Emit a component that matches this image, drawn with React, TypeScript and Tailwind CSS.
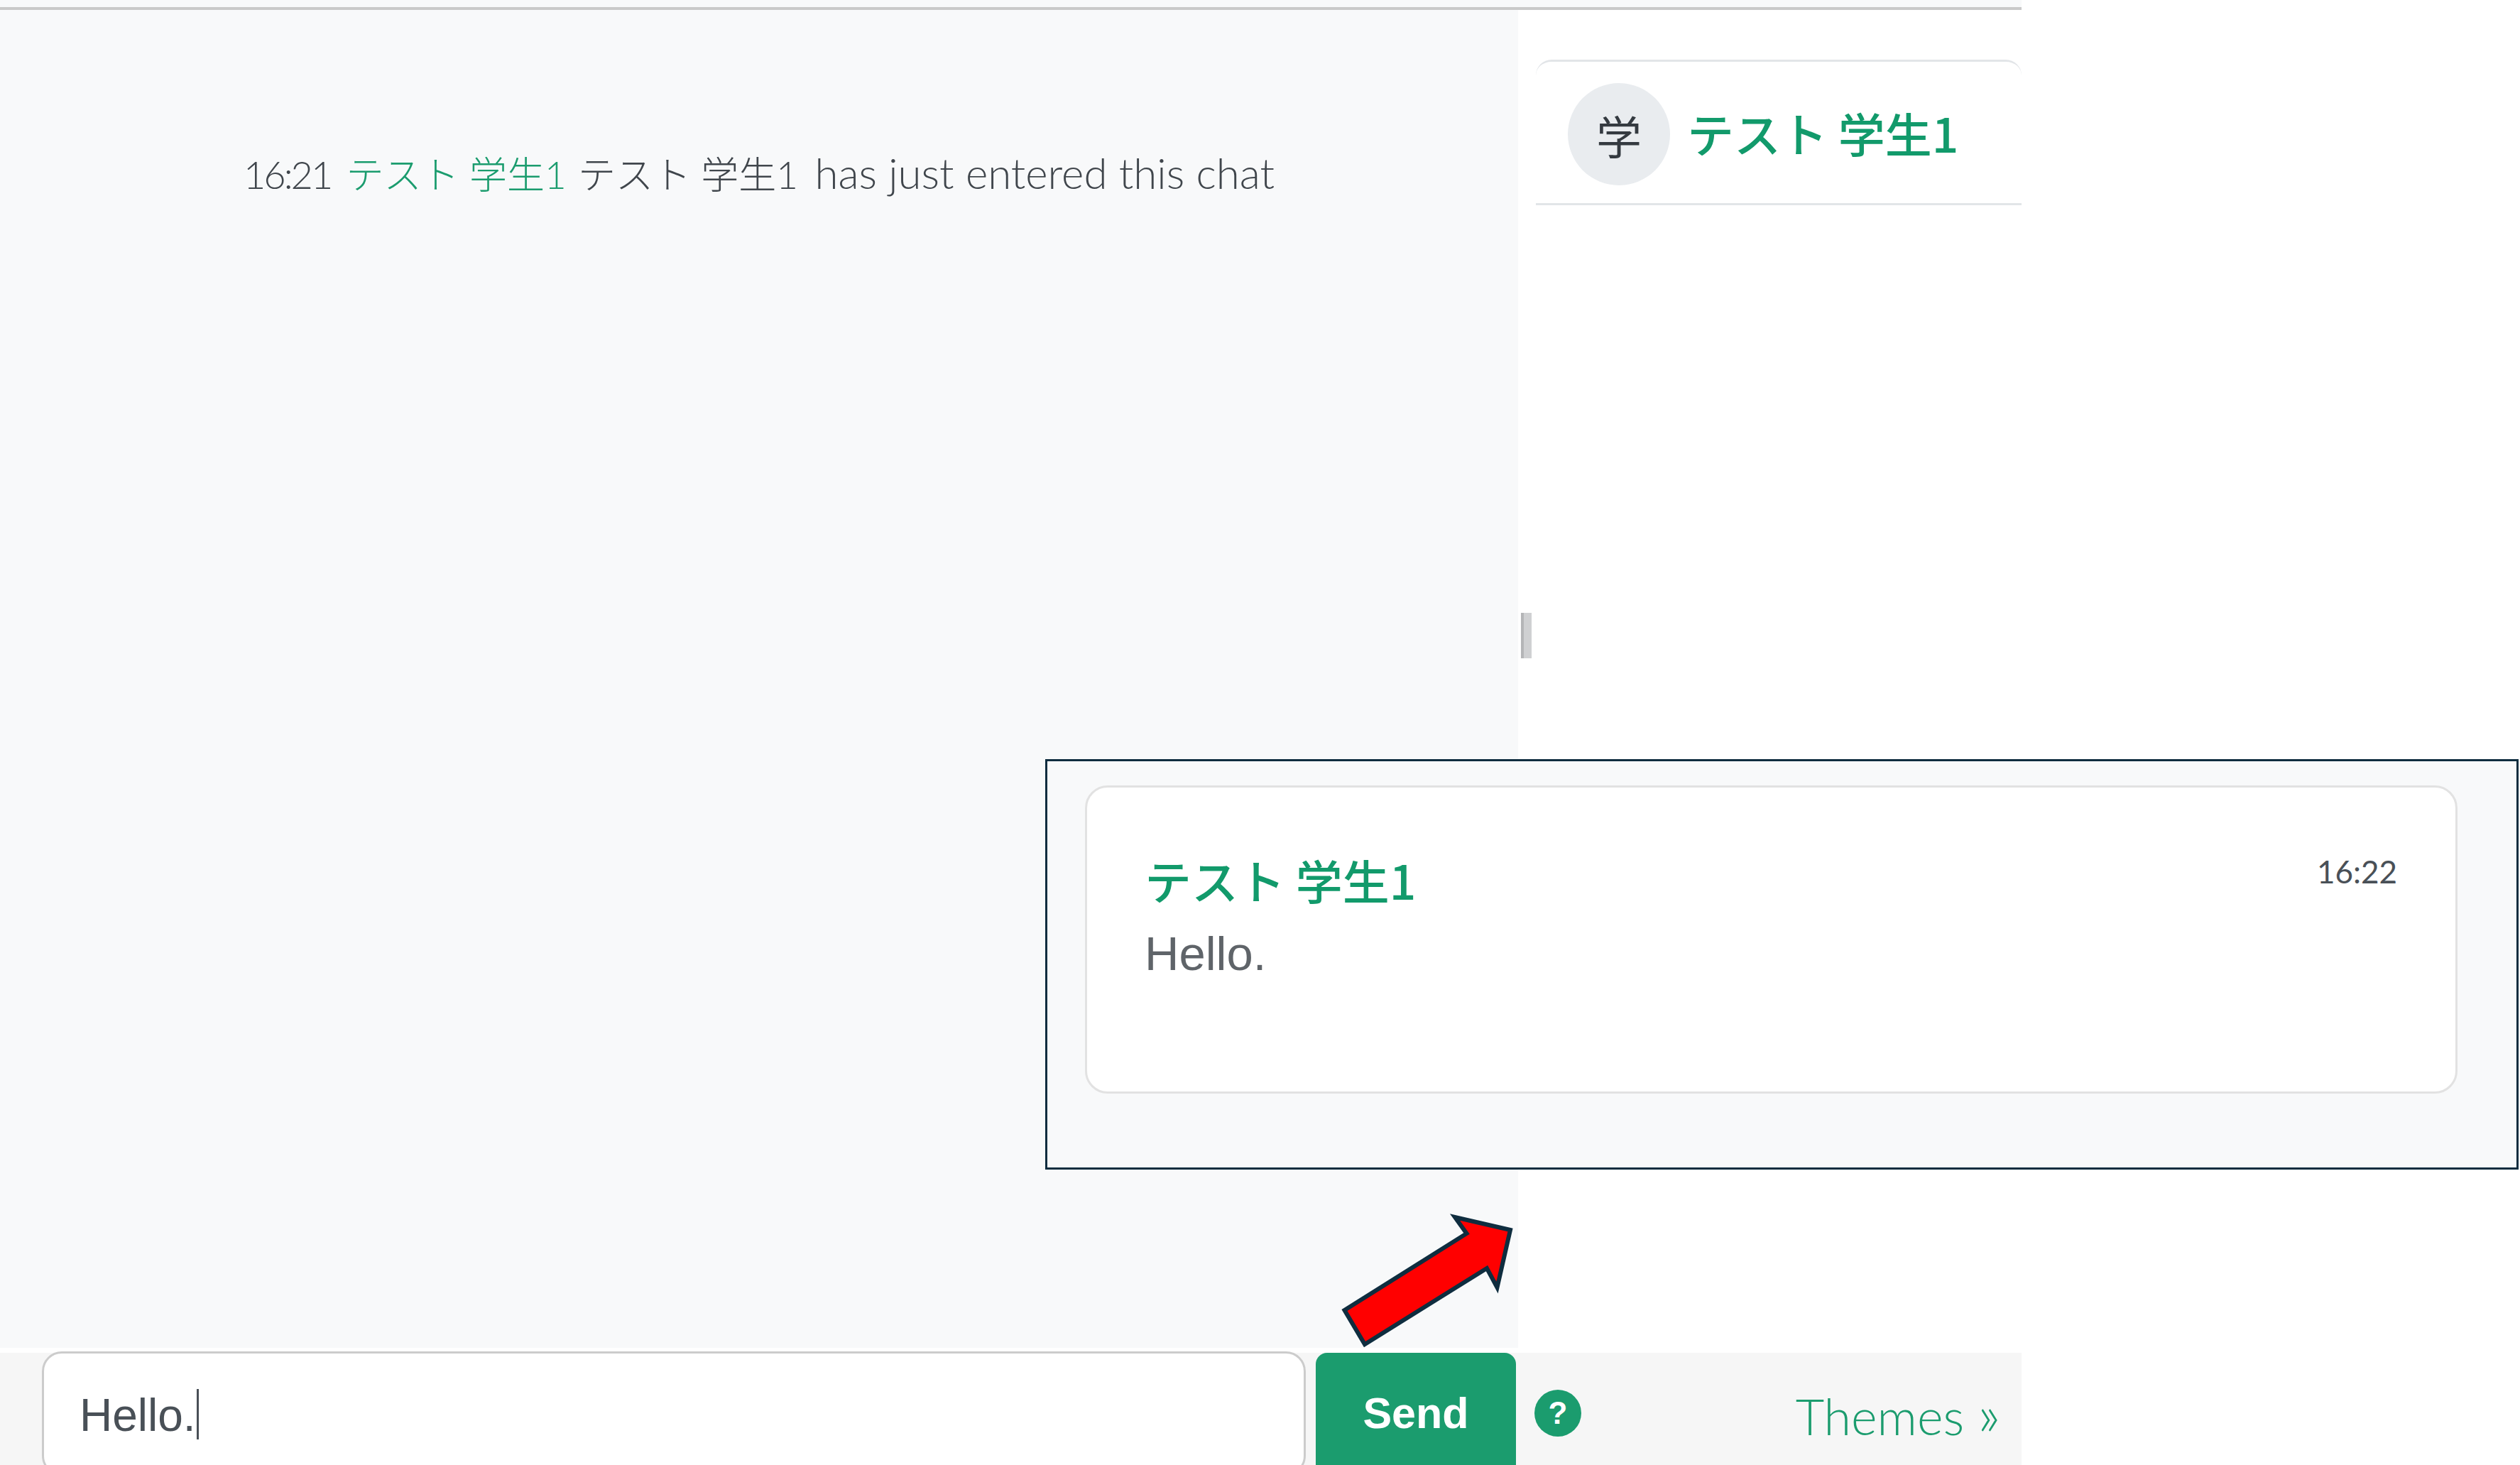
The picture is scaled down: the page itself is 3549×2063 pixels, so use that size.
const body = "font-['Lato','Noto_Sans_CJK_JP',sans-serif]"
const cjk = "font-['Noto_Sans_CJK_JP',sans-serif]"

const Arrow: React.FC = () => (
  <svg className="absolute left-[1880px] top-[1700px]" width="260" height="205" viewBox="1880 1700 260 205">
    <polygon
      points="2127,1732 2049,1714 2065.5,1737 1893.5,1845 1922,1893 2094,1786 2108.5,1813"
      fill="#ff0000"
      stroke="#0f2d3f"
      strokeWidth="6"
    />
  </svg>
)

const MessageCallout: React.FC = () => (
  <div className="absolute left-[1472px] top-[1069px] w-[2075px] h-[578px] border-[3px] border-[#0f2d3f] bg-[#f8f9fa] pl-[53px] pt-[34px]">
    <div className="w-[1933px] h-[434px] rounded-[32px] border-[3px] border-[#e2e2e2] bg-white pl-[81px] pr-[82px] pt-[84px] flex justify-between items-start">
      <div>
        <div className={`${cjk} font-medium text-[66px] leading-[90px] text-[#129a6b]`}>テスト 学生1</div>
        <div className="font-['Liberation_Sans',sans-serif] text-[67px] leading-[80px] text-[#5f6469] mt-[20px]">Hello.</div>
      </div>
      <div className={`${body} text-[44px] leading-[60px] text-[#495057] mt-[4px]`}>16:22</div>
    </div>
  </div>
)

export default function App() {
  return (
    <div className="relative w-[3549px] h-[2063px] overflow-hidden bg-white">
      <div className="w-[2847px] h-[2063px] flex flex-col">
        <div className="h-[14px] shrink-0 bg-[#f8f9fa] border-b-[4px] border-[#c9c9c9]" />
        <div className="h-[1884px] shrink-0 flex">
          <div className="w-[2138px] bg-[#f8f9fa] pl-[343px] pt-[194px]">
            <div className={`${body} font-light text-[60px] leading-[70px] text-[#40464c] whitespace-nowrap`}>
              <span className="text-[54px] tracking-[-3px]">16:21</span>{" "}
              <span className="ml-[5px] text-[53px] text-[#1b9c6e]">テスト 学生1</span>{" "}
              <span className="text-[53px]">テスト 学生1</span>{" "}
              <span className="ml-[7px]">has just entered this chat</span>
            </div>
          </div>
          <div className="relative flex-1 pl-[25px] pt-[70px]">
            <div className="absolute left-[4px] top-[849px] w-[15px] h-[64px] bg-[#cfd0d2] border-l-[4px] border-[#b4b5b7]" />
            <div className="h-[205px] border-y-[3px] border-[#e2e5e8] rounded-t-[22px] flex items-center pl-[45px] pt-[4px]">
              <div className={`w-[144px] h-[144px] rounded-full bg-[#e9ecef] flex items-center justify-center ${cjk} text-[64px] text-[#343a40]`}>学</div>
              <div className={`ml-[24px] mb-[4px] ${cjk} font-medium text-[66px] text-[#129a6b] whitespace-nowrap`}>テスト 学生1</div>
            </div>
          </div>
        </div>
        <div className="mt-[7px] flex-1 bg-[#f6f6f6] flex pl-[59px]">
          <div className="relative w-[1780px] h-[175px] mt-[-2px] shrink-0 rounded-[28px] border-[3px] border-[#cccccc] bg-white pl-[50px] pt-[52px] flex items-start">
            <span className="font-['Liberation_Sans',sans-serif] text-[64px] leading-[70px] text-[#495057]">Hello.</span>
            <span className="ml-[1px] mt-[-2px] w-[3px] h-[71px] bg-[#495057]" />
          </div>
          <div className="ml-[14px] w-[282px] h-[170px] shrink-0 rounded-t-[16px] bg-[#1b9c6e] pt-[50px] text-center font-['Liberation_Sans',sans-serif] font-bold text-[61px] leading-[70px] text-white">Send</div>
          <div className="ml-[26px] mt-[52px] w-[66px] h-[66px] shrink-0 rounded-full bg-[#1b9c6e] flex items-center justify-center font-['Liberation_Sans',sans-serif] font-bold text-[44px] text-white">?</div>
          <div className={`ml-auto mr-[30px] mt-[49px] ${body} font-light text-[70px] leading-[80px] text-[#1b9c6e] whitespace-nowrap`}>Themes <span className="text-[80px] leading-[60px]">»</span></div>
        </div>
      </div>
      <MessageCallout />
      <Arrow />
    </div>
  )
}
